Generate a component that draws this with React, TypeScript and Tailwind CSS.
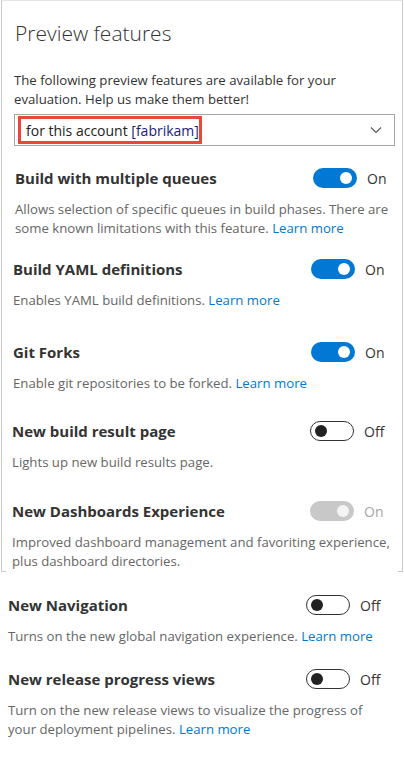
import React from "react";

type Feature = {
  title: string;
  lines: string[];
  learnMore?: boolean;
  state: "on" | "off" | "disabled";
  left: string;
  top: string;
};

const panelFeatures: Feature[] = [
  {
    title: "Build with multiple queues",
    lines: [
      "Allows selection of specific queues in build phases. There are",
      "some known limitations with this feature.",
    ],
    learnMore: true,
    state: "on",
    left: "ml-[13px]",
    top: "mt-[22px]",
  },
  {
    title: "Build YAML definitions",
    lines: ["Enables YAML build definitions."],
    learnMore: true,
    state: "on",
    left: "ml-[11px]",
    top: "mt-[21px]",
  },
  {
    title: "Git Forks",
    lines: ["Enable git repositories to be forked."],
    learnMore: true,
    state: "on",
    left: "ml-[11px]",
    top: "mt-[32px]",
  },
  {
    title: "New build result page",
    lines: ["Lights up new build results page."],
    state: "off",
    left: "ml-[10px]",
    top: "mt-[28px]",
  },
  {
    title: "New Dashboards Experience",
    lines: [
      "Improved dashboard management and favoriting experience,",
      "plus dashboard directories.",
    ],
    state: "disabled",
    left: "ml-[10px]",
    top: "mt-[29px]",
  },
];

const moreFeatures: Feature[] = [
  {
    title: "New Navigation",
    lines: ["Turns on the new global navigation experience."],
    learnMore: true,
    state: "off",
    left: "ml-[8px]",
    top: "mt-[23px]",
  },
  {
    title: "New release progress views",
    lines: [
      "Turn on the new release views to visualize the progress of",
      "your deployment pipelines.",
    ],
    learnMore: true,
    state: "off",
    left: "ml-[8px]",
    top: "mt-[23px]",
  },
];

const Toggle = ({ state }: { state: Feature["state"] }) => {
  if (state === "on") {
    return (
      <div className="flex h-[20px] w-[44px] items-center justify-end rounded-full bg-[#0078d4] pr-[5px]">
        <div className="h-[12px] w-[12px] rounded-full bg-white" />
      </div>
    );
  }
  if (state === "disabled") {
    return (
      <div className="flex h-[20px] w-[44px] items-center justify-end rounded-full bg-[#c8c8c8] pr-[5px]">
        <div className="h-[12px] w-[12px] rounded-full bg-[#f4f4f4]" />
      </div>
    );
  }
  return (
    <div className="flex h-[20px] w-[44px] items-center rounded-full border border-[#333333] bg-white pl-[4px]">
      <div className="h-[12px] w-[12px] rounded-full bg-[#222222]" />
    </div>
  );
};

const FeatureRow = ({ feature }: { feature: Feature }) => {
  const last = feature.lines.length - 1;
  return (
    <div className={`${feature.left} ${feature.top} w-[382px]`}>
      <div className="flex h-[20px] items-center">
        <div className="flex-1 text-[15px] font-bold text-[#333333]">
          {feature.title}
        </div>
        <Toggle state={feature.state} />
        <div
          className={`ml-[10px] w-[30px] text-[14px] ${
            feature.state === "disabled" ? "text-[#a6a6a6]" : "text-[#333333]"
          }`}
        >
          {feature.state === "off" ? "Off" : "On"}
        </div>
      </div>
      <div className="mt-[12px] text-[13.2px] leading-[19px] text-[#666666]">
        {feature.lines.map((line, i) => (
          <div key={i} className="whitespace-nowrap">
            {line}
            {i === last && feature.learnMore && (
              <span className="text-[#0078d4]"> Learn more</span>
            )}
          </div>
        ))}
      </div>
    </div>
  );
};

export default function App() {
  return (
    <div
      className="h-[761px] w-[404px] overflow-hidden bg-white"
      style={{ fontFamily: '"Open Sans", "Noto Sans", sans-serif' }}
    >
      <div className="ml-[1px] w-[402px] border-l border-r border-t border-[#c8c8c8] border-t-[#e4e4e4]">
        <div className="ml-[13px] mt-[19px] text-[21px] font-light leading-[26px] text-[#333333]">
          Preview features
        </div>
        <div className="ml-[12px] mt-[25px] text-[13.2px] leading-[19px] text-[#333333]">
          <div className="whitespace-nowrap">
            The following preview features are available for your
          </div>
          <div className="whitespace-nowrap">
            evaluation. Help us make them better!
          </div>
        </div>
        <div className="ml-[12px] mt-[5px] flex h-[32px] w-[381px] items-center border border-[#a6a6a6] pl-[3px] pr-[12px]">
          <div className="flex h-[28px] w-[184px] items-center border-[3px] border-[#e8473a] pl-[5px] text-[14px] text-[#222222]">
            for this account&nbsp;
            <span className="text-[#1b1b7a]">[fabrikam]</span>
          </div>
          <svg
            className="ml-auto"
            width="12"
            height="8"
            viewBox="0 0 12 8"
            fill="none"
            stroke="#555555"
            strokeWidth="1.1"
          >
            <path d="M1 1.5 L6 6.5 L11 1.5" />
          </svg>
        </div>
        {panelFeatures.map((f) => (
          <FeatureRow key={f.title} feature={f} />
        ))}
      </div>
      <div className="flex w-[404px] justify-between">
        <div className="ml-[1px] h-[1px] w-[5px] bg-[#c8c8c8]" />
        <div className="mr-[1px] h-[1px] w-[5px] bg-[#c8c8c8]" />
      </div>
      {moreFeatures.map((f) => (
        <FeatureRow key={f.title} feature={f} />
      ))}
    </div>
  );
}
